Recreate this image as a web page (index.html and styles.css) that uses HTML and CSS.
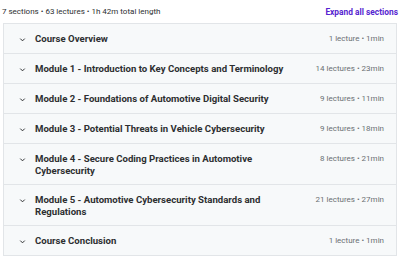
FILE: index.html
```html
<!DOCTYPE html>
<html>
<head>
<meta charset="utf-8">
<link rel="stylesheet" href="styles.css">
</head>
<body>
<div class="curriculum">
  <div class="summary">
    <span class="stats">7 sections • 63 lectures • 1h 42m total length</span>
    <span class="expand">Expand all sections</span>
  </div>
  <div class="sections">
    <div class="section">
      <svg class="chev" viewBox="0 0 10 10"><path d="M2.5 4 L5 6.5 L7.5 4" fill="none" stroke="#2d2f31" stroke-width="1.1"/></svg>
      <span class="title">Course Overview</span>
      <span class="meta">1 lecture • 1min</span>
    </div>
    <div class="section">
      <svg class="chev" viewBox="0 0 10 10"><path d="M2.5 4 L5 6.5 L7.5 4" fill="none" stroke="#2d2f31" stroke-width="1.1"/></svg>
      <span class="title">Module 1 - Introduction to Key Concepts and Terminology</span>
      <span class="meta">14 lectures • 23min</span>
    </div>
    <div class="section">
      <svg class="chev" viewBox="0 0 10 10"><path d="M2.5 4 L5 6.5 L7.5 4" fill="none" stroke="#2d2f31" stroke-width="1.1"/></svg>
      <span class="title">Module 2 - Foundations of Automotive Digital Security</span>
      <span class="meta">9 lectures • 11min</span>
    </div>
    <div class="section">
      <svg class="chev" viewBox="0 0 10 10"><path d="M2.5 4 L5 6.5 L7.5 4" fill="none" stroke="#2d2f31" stroke-width="1.1"/></svg>
      <span class="title">Module 3 - Potential Threats in Vehicle Cybersecurity</span>
      <span class="meta">9 lectures • 18min</span>
    </div>
    <div class="section">
      <svg class="chev" viewBox="0 0 10 10"><path d="M2.5 4 L5 6.5 L7.5 4" fill="none" stroke="#2d2f31" stroke-width="1.1"/></svg>
      <span class="title">Module 4 - Secure Coding Practices in Automotive Cybersecurity</span>
      <span class="meta">8 lectures • 21min</span>
    </div>
    <div class="section">
      <svg class="chev" viewBox="0 0 10 10"><path d="M2.5 4 L5 6.5 L7.5 4" fill="none" stroke="#2d2f31" stroke-width="1.1"/></svg>
      <span class="title">Module 5 - Automotive Cybersecurity Standards and Regulations</span>
      <span class="meta">21 lectures • 27min</span>
    </div>
    <div class="section">
      <svg class="chev" viewBox="0 0 10 10"><path d="M2.5 4 L5 6.5 L7.5 4" fill="none" stroke="#2d2f31" stroke-width="1.1"/></svg>
      <span class="title">Course Conclusion</span>
      <span class="meta">1 lecture • 1min</span>
    </div>
  </div>
</div>
</body>
</html>
```
FILE: styles.css
```css
* { box-sizing: border-box; }
html, body { margin: 0; padding: 0; background: #fff; }
body { font-family: Roboto, "Noto Sans", sans-serif; color: #2d2f31; }
.curriculum { padding: 0 3px 0 3px; width: 400px; }
.summary {
  height: 23px;
  display: flex;
  align-items: center;
  justify-content: space-between;
  margin-left: -1px;
  margin-right: -3px;
  padding-right: 2px;
}
.stats { font-size: 8px; color: #2d2f31; }
.expand { font-size: 8.4px; font-weight: 700; color: #5624d0; }
.sections { border: 1px solid #e2e5e8; border-bottom: none; }
.section {
  display: flex;
  align-items: flex-start;
  min-height: 30px;
  background: #f7f9fa;
  border-bottom: 1px solid #e2e5e8;
  padding: 9px 12px 7px 14px;
}
.chev { width: 9px; height: 9px; flex: none; margin: 2px 8px 0 0; }
.title { flex: 1; font-size: 9.6px; font-weight: 700; line-height: 12px; padding-right: 14px; }
.meta { flex: none; font-size: 8px; color: #6a6f73; line-height: 12px; }
```
